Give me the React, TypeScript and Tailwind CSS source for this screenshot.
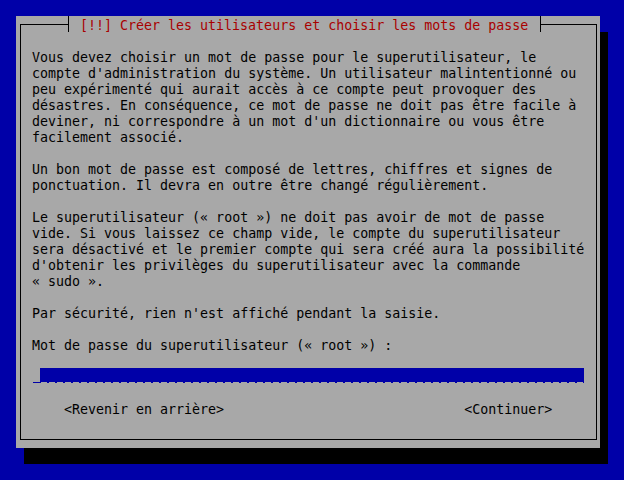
const body = [
  "Vous devez choisir un mot de passe pour le superutilisateur, le",
  "compte d'administration du système. Un utilisateur malintentionné ou",
  "peu expérimenté qui aurait accès à ce compte peut provoquer des",
  "désastres. En conséquence, ce mot de passe ne doit pas être facile à",
  "deviner, ni correspondre à un mot d'un dictionnaire ou vous être",
  "facilement associé.",
  "",
  "Un bon mot de passe est composé de lettres, chiffres et signes de",
  "ponctuation. Il devra en outre être changé régulièrement.",
  "",
  "Le superutilisateur (« root ») ne doit pas avoir de mot de passe",
  "vide. Si vous laissez ce champ vide, le compte du superutilisateur",
  "sera désactivé et le premier compte qui sera créé aura la possibilité",
  "d'obtenir les privilèges du superutilisateur avec la commande",
  "« sudo ».",
  "",
  "Par sécurité, rien n'est affiché pendant la saisie.",
  "",
  "Mot de passe du superutilisateur (« root ») :",
  "",
];

const PasswordField = () => (
  <div className="flex h-4">
    <div className="flex h-4 w-2 items-end pb-[1px] pl-[1px]">
      <div className="h-px w-[7px] bg-[#0000a8]" />
    </div>
    <div className="flex h-[15px] bg-[#0000a8]">
      {Array.from({ length: 68 }).map((_, i) => (
        <div key={i} className="flex h-[15px] w-2 items-end pl-[1px]">
          <div className="h-px w-[6px] bg-[#a8a8a8]" />
        </div>
      ))}
    </div>
  </div>
);

export default function App() {
  return (
    <div
      className="h-[480px] w-[624px] overflow-hidden bg-[#0000a8] pl-4 pt-4 text-[13.3px] leading-4 text-black"
      style={{ fontFamily: '"DejaVu Sans Mono", monospace' }}
    >
      <div className="relative h-[432px] w-[584px] bg-[#a8a8a8] pl-1 pt-2 shadow-[8px_16px_0_0_#000]">
        <div className="h-[416px] w-[577px] border border-black pl-[11px] pt-[23px]">
          {body.map((line, i) => (
            <div key={i} className="h-4 whitespace-pre pt-[2px]">
              {line}
            </div>
          ))}
          <PasswordField />
          <div className="h-4" />
          <div className="h-4 whitespace-pre pt-[2px]">
            {"    <Revenir en arrière>                              <Continuer>"}
          </div>
        </div>
        <div className="absolute left-[52px] top-0 h-4 w-[473px] whitespace-pre border-x border-black bg-[#a8a8a8] pl-[11px] pt-[2px] text-[#a80000]">
          [!!] Créer les utilisateurs et choisir les mots de passe
        </div>
      </div>
    </div>
  );
}
